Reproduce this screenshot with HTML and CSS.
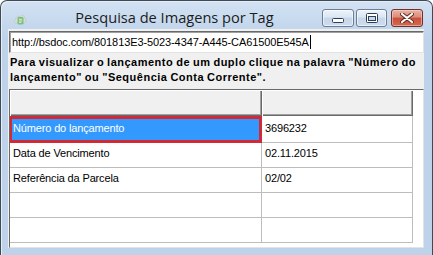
FILE: index.html
```html
<!DOCTYPE html>
<html lang="pt">
<head>
<meta charset="utf-8">
<title>Pesquisa de Imagens por Tag</title>
<link rel="stylesheet" href="styles.css">
</head>
<body>
<div class="window">
  <div class="titlebar">
    <svg class="app-icon" width="14" height="14" viewBox="0 0 14 14">
      <path d="M3 11 C0.5 11 0.5 7.5 2.8 7.3 C2.6 4.6 5.6 3.4 7.2 5 C8 2.6 11.8 3 11.6 6 C13.6 6.3 13.6 11 11 11 Z" fill="#d3dcd6" stroke="#b9c6be" stroke-width="0.6"/>
      <rect x="5" y="5.5" width="5" height="6.5" rx="0.5" fill="#8fcf8c" stroke="#5da65a" stroke-width="0.6"/>
      <path d="M6 7.5 H9 M6 9 H9 M6 10.5 H8" stroke="#e8f6e6" stroke-width="0.6"/>
    </svg>
    <div class="title">Pesquisa de Imagens por Tag</div>
    <div class="caption">
      <div class="cbtn min">
        <svg width="12" height="5" viewBox="0 0 12 5"><rect x="0.5" y="0.5" width="11" height="4" rx="1" fill="#fff" stroke="#2c3f57"/></svg>
      </div>
      <div class="cbtn max">
        <svg width="12" height="10" viewBox="0 0 12 10"><rect x="0.5" y="0.5" width="11" height="9" rx="1" fill="#fff" stroke="#2c3f57"/><rect x="2.5" y="3.5" width="7" height="4" fill="#c9d7ea" stroke="#2c3f57"/></svg>
      </div>
      <div class="cbtn close">
        <svg width="14" height="10" viewBox="0 0 14 10"><path d="M2 1 L12 9 M12 1 L2 9" stroke="#5a2a22" stroke-width="4" stroke-linecap="round"/><path d="M2 1 L12 9 M12 1 L2 9" stroke="#fff" stroke-width="2.2" stroke-linecap="round"/></svg>
      </div>
    </div>
  </div>
  <div class="client">
    <div class="textbox"><span class="tb-text">http://bsdoc.com/801813E3-5023-4347-A445-CA61500E545A</span><span class="caret"></span></div>
    <p class="hint">Para visualizar o lançamento de um duplo clique na palavra "Número do<br>lançamento" ou "Sequência Conta Corrente".</p>
    <div class="grid">
      <div class="grow head"><div class="gc c1"></div><div class="gc c2"></div></div>
      <div class="grow first"><div class="gc c1 selected">Número do lançamento</div><div class="gc c2">3696232</div></div>
      <div class="grow"><div class="gc c1">Data de Vencimento</div><div class="gc c2">02.11.2015</div></div>
      <div class="grow"><div class="gc c1">Referência da Parcela</div><div class="gc c2">02/02</div></div>
      <div class="grow"><div class="gc c1"></div><div class="gc c2"></div></div>
      <div class="grow"><div class="gc c1"></div><div class="gc c2"></div></div>
    </div>
  </div>
</div>
</body>
</html>
```
FILE: styles.css
```css
html, body {
  margin: 0;
  padding: 0;
}
body {
  width: 433px;
  height: 255px;
  overflow: hidden;
  background: #ffffff;
  font-family: "Liberation Sans", Arial, sans-serif;
}
.window {
  box-sizing: border-box;
  width: 433px;
  height: 255px;
  border: 1px solid #3e4a57;
  border-bottom: none;
  border-radius: 7px 7px 0 0;
  background: linear-gradient(#d3e2f3 0px, #c2d6ec 28px, #bed3ea 40px);
  padding: 0 8px 7px 7px;
  display: flex;
  flex-direction: column;
  box-shadow: inset 1px 1px 0 #e6eef8;
}
.titlebar {
  height: 28px;
  display: flex;
  align-items: flex-start;
  flex-shrink: 0;
}
.app-icon {
  margin: 11px 0 0 5px;
  flex-shrink: 0;
}
.title {
  flex: 1;
  text-align: center;
  font-family: "Open Sans", "Noto Sans", sans-serif;
  font-size: 14.6px;
  line-height: 20px;
  margin-top: 6px;
  color: #1c1c1c;
  white-space: nowrap;
}
.caption {
  display: flex;
  margin-top: 8px;
  margin-right: 1px;
  gap: 2px;
}
.cbtn {
  box-sizing: border-box;
  height: 18px;
  border: 1px solid #6c7e96;
  border-radius: 3px;
  display: flex;
  align-items: center;
  justify-content: center;
  background: linear-gradient(#edf3fa 0%, #dbe6f3 45%, #c6d6ea 50%, #cfdcee 100%);
  box-shadow: inset 0 0 0 1px rgba(255,255,255,0.6);
}
.cbtn.min { width: 32px; }
.cbtn.min svg { margin-top: 5px; }
.cbtn.max { width: 31px; }
.cbtn.close {
  width: 32px;
  margin-left: 2px;
  border-color: #6e3028;
  background: linear-gradient(#eab2a4 0%, #dc8a78 45%, #c8503a 50%, #d36a4e 100%);
  box-shadow: inset 0 0 0 1px rgba(255,220,210,0.5);
}
.client {
  flex: 1;
  background: #f0f0f0;
  display: flex;
  flex-direction: column;
  min-height: 0;
}
.textbox {
  box-sizing: border-box;
  margin: 2px 0 0 1px;
  height: 22px;
  background: #fff;
  border-style: solid;
  border-width: 1px;
  border-color: #696969 #e3e3e3 #e3e3e3 #696969;
  box-shadow: inset 1px 1px 0 #a0a0a0;
  padding: 3px 0 0 2px;
  font-size: 11px;
  line-height: 14px;
  color: #000;
  display: flex;
  align-items: flex-start;
  white-space: nowrap;
}
.tb-text {
  letter-spacing: -0.1px;
}
.caret {
  display: inline-block;
  width: 1px;
  height: 14px;
  background: #000;
  margin-left: 1px;
}
.hint {
  margin: 2px 0 4px 2px;
  font-size: 11px;
  font-weight: bold;
  line-height: 15px;
  letter-spacing: 0.5px;
  word-spacing: -0.6px;
  color: #000;
  white-space: nowrap;
}
.grid {
  flex: 1;
  margin-left: 1px;
  border-style: solid;
  border-width: 1px;
  border-color: #696969 #e3e3e3 #e3e3e3 #696969;
  background: #fff;
  min-height: 0;
  overflow: hidden;
}
.grow {
  display: flex;
  height: 25px;
}
.grow.head { height: 26px; }
.grow.first { height: 27px; }
.gc {
  box-sizing: border-box;
  height: 100%;
  border-right: 1px solid #bdbdbd;
  border-bottom: 1px solid #bdbdbd;
  font-size: 11px;
  line-height: 14px;
  letter-spacing: -0.15px;
  padding: 3px 0 0 3px;
  color: #000;
  white-space: nowrap;
}
.gc.c1 { width: 252px; }
.gc.c2 { width: 151px; padding-left: 3px; }
.head .gc {
  background: #f0f0f0;
  border: none;
  box-shadow: inset 1px 1px 0 #ffffff, inset -1px -1px 0 #696969, inset -2px -2px 0 #a0a0a0;
}
.first .gc { padding-top: 5px; }
.gc.selected {
  position: relative;
  background: #3399ff;
  color: #fff;
}
.gc.selected::after {
  content: "";
  position: absolute;
  left: -1px;
  top: 0;
  right: -1px;
  bottom: -1px;
  border: 3px solid #d12a36;
}
```
